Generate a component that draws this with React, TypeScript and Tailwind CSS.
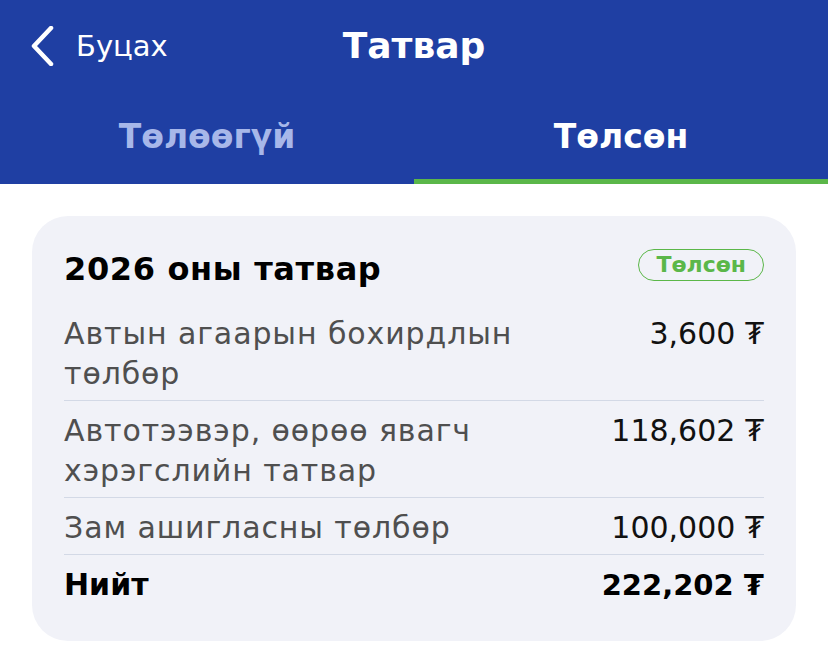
const FONT = { fontFamily: "'DejaVu Sans', 'Noto Sans', sans-serif" };

const ROWS = [
  { label: "Автын агаарын бохирдлын төлбөр", amount: "3,600 ₮" },
  { label: "Автотээвэр, өөрөө явагч хэрэгслийн татвар", amount: "118,602 ₮" },
  { label: "Зам ашигласны төлбөр", amount: "100,000 ₮" },
];

function Chevron() {
  return (
    <svg width="26" height="40" viewBox="0 0 26 40" fill="none">
      <path d="M21 2 L4 20 L21 38" stroke="#fff" strokeWidth="4.5" strokeLinecap="round" strokeLinejoin="round" />
    </svg>
  );
}

export default function App() {
  return (
    <div className="min-h-[659px] w-[828px] bg-white" style={FONT}>
      <header className="bg-[#1f3fa3] text-white">
        <div className="grid h-[92px] grid-cols-[1fr_auto_1fr] items-center">
          <div className="flex items-center gap-[20px] pl-[30px]">
            <Chevron />
            <span className="text-[29px] leading-none">Буцах</span>
          </div>
          <h1 className="text-[36px] font-bold leading-none">Татвар</h1>
          <div />
        </div>
        <div className="grid h-[92px] grid-cols-2">
          <div className="flex items-center justify-center pb-[2px] text-[33px] font-bold text-[#a7b7e9]">Төлөөгүй</div>
          <div className="flex items-center justify-center border-b-[5px] border-[#5bb749] pt-[2px] text-[33px] font-bold">
            Төлсөн
          </div>
        </div>
      </header>

      <div className="mx-[32px] mt-[32px] rounded-[36px] bg-[#f1f2f8] px-[32px] pb-[36px] pt-[32px]">
        <div className="flex items-start justify-between">
          <h2 className="text-[32px] font-bold leading-[42px] tracking-[0.02em] text-black">2026 оны татвар</h2>
          <span className="mt-[1px] rounded-full border border-[#5bb749] px-[17px] py-[1px] text-[22px] font-bold leading-[28px] text-[#5bb749]">
            Төлсөн
          </span>
        </div>
        <div className="mt-[14px]">
          {ROWS.map((r) => (
            <div key={r.label} className="flex justify-between gap-6 border-b border-[#d3d9e6] pb-[6px] pt-[10px]">
              <div className="max-w-[470px] text-[30px] leading-[40px] tracking-[0.03em] text-[#4f4f4f]">{r.label}</div>
              <div className="whitespace-nowrap text-[30px] leading-[40px] text-[#111]">{r.amount}</div>
            </div>
          ))}
          <div className="flex justify-between pt-[10px]">
            <div className="text-[30px] font-bold leading-[40px] text-black">Нийт</div>
            <div className="text-[29px] font-bold leading-[40px] text-black">222,202 ₮</div>
          </div>
        </div>
      </div>
    </div>
  );
}
